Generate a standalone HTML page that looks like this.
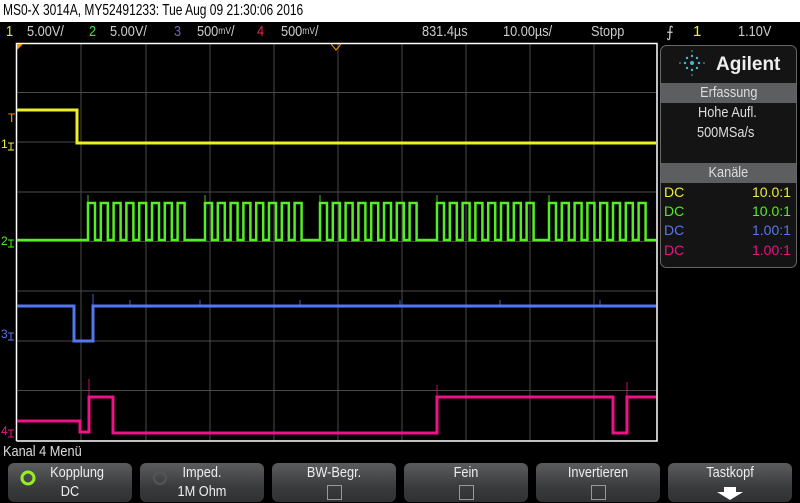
<!DOCTYPE html><html><head><style>
body{margin:0;width:800px;height:503px;background:#000;overflow:hidden;font-family:"Liberation Sans",sans-serif;position:relative}
.t{position:absolute;white-space:nowrap;transform-origin:0 0}
#title{position:absolute;left:0;top:0;width:800px;height:22px;background:#fff}
.btn{position:absolute;top:463px;width:124px;height:39px;border-radius:6px;background:linear-gradient(#5a5c5e,#3a3c3e 60%,#2e3032);color:#eee;font-size:15px;text-align:center}
.btn .a{position:absolute;left:0;right:0;top:1px;transform:scaleX(.85)}
.btn .b{position:absolute;left:0;right:0;top:20px;transform:scaleX(.85)}
.cb{position:absolute;left:55px;top:22px;width:13px;height:13px;border:1px solid #999}
.hd{position:absolute;left:661px;width:135px;height:20px;background:#5c5e60;color:#ddd;font-size:15px;text-align:center;line-height:20px}
</style></head><body>
<div id="title"><div class="t" style="left:3px;top:2px;font-size:16px;color:#000;transform:scaleX(.75)">MS0-X 3014A, MY52491233: Tue Aug 09 21:30:06 2016</div></div>
<div class="t" style="top:23px;left:6px;font-size:15px;color:#ee3;transform:scaleX(.85)">1</div>
<div class="t" style="top:23px;left:27px;font-size:15px;color:#ccc;transform:scaleX(.85)">5.00V/</div>
<div class="t" style="top:23px;left:89px;font-size:15px;color:#4d4;transform:scaleX(.85)">2</div>
<div class="t" style="top:23px;left:110px;font-size:15px;color:#ccc;transform:scaleX(.85)">5.00V/</div>
<div class="t" style="top:23px;left:174px;font-size:15px;color:#66c;transform:scaleX(.85)">3</div>
<div class="t" style="top:23px;left:197px;font-size:15px;color:#ccc;transform:scaleX(.85)">500<span style="font-size:10px;vertical-align:2px">mV</span>/</div>
<div class="t" style="top:23px;left:257px;font-size:15px;color:#e24;transform:scaleX(.85)">4</div>
<div class="t" style="top:23px;left:281px;font-size:15px;color:#ccc;transform:scaleX(.85)">500<span style="font-size:10px;vertical-align:2px">mV</span>/</div>
<div class="t" style="top:23px;left:422px;font-size:15px;color:#ccc;transform:scaleX(.85)">831.4µs</div>
<div class="t" style="top:23px;left:503px;font-size:15px;color:#ccc;transform:scaleX(.85)">10.00µs/</div>
<div class="t" style="top:23px;left:591px;font-size:15px;color:#ccc;transform:scaleX(.85)">Stopp</div>
<div class="t" style="top:23px;left:666px;font-size:15px;color:#ccc">⨍</div>
<div class="t" style="top:23px;left:693px;font-size:15px;color:#ee3">1</div>
<div class="t" style="top:23px;left:738px;font-size:15px;color:#ccc;transform:scaleX(.85)">1.10V</div>
<svg width="800" height="503" style="position:absolute;left:0;top:0">
<g stroke="#4a4a4a" stroke-width="1">
<path d="M81 43V441M146 43V441M210 43V441M274 43V441M338 43V441M402 43V441M466 43V441M530 43V441M594 43V441"/>
<path d="M16 92.5H657M16 142H657M16 192H657M16 241.5H657M16 291H657M16 341H657M16 390.5H657"/>
</g>
<path d="M16.5 441V43.5H657V441H16.5" fill="none" stroke="#fff" stroke-width="1.5"/>
<path d="M17 44h6l-6 6z" fill="#f90"/><path d="M331 44l5 6 5-6" fill="none" stroke="#f90"/>
<g fill="none" stroke-width="3">
<path stroke="#ee2" d="M17 110H77V143H656"/>
<path stroke="#5e2" stroke-width="2.5" d="M17 240H88v-37h7v37h5.8v-37h7v37h5.8v-37h7v37h5.8v-37h7v37h5.8v-37h7v37h5.8v-37h7v37h5.8v-37h7v37h5.8v-37h7v37H205v-37h7v37h5.8v-37h7v37h5.8v-37h7v37h5.8v-37h7v37h5.8v-37h7v37h5.8v-37h7v37h5.8v-37h7v37h5.8v-37h7v37H320v-37h7v37h5.8v-37h7v37h5.8v-37h7v37h5.8v-37h7v37h5.8v-37h7v37h5.8v-37h7v37h5.8v-37h7v37h5.8v-37h7v37H437v-37h7v37h5.8v-37h7v37h5.8v-37h7v37h5.8v-37h7v37h5.8v-37h7v37h5.8v-37h7v37h5.8v-37h7v37h5.8v-37h7v37H549v-37h7v37h5.8v-37h7v37h5.8v-37h7v37h5.8v-37h7v37h5.8v-37h7v37h5.8v-37h7v37h5.8v-37h7v37h5.8v-37h7v37H656"/>
<path stroke="#57e" d="M17 306H74V341H93V306H656"/>
<path stroke="#e18" d="M17 421H80V432H89V397H113V433H437V397H613V433H627V397H656"/>
</g>
<g fill="none" stroke-width="1" opacity=".8">
<path stroke="#5e2" d="M88 240v-45M205 240v-45M320 240v-45M437 240v-45M549 240v-45"/>
<path stroke="#57e" d="M93 306v-12M130 306v-6M200 306v-6M300 306v-6M400 306v-6M500 306v-6M600 306v-6"/>
<path stroke="#e18" d="M89 397v-18M437 397v-12M627 397v-15"/>
</g>
<g font-size="12" font-family="Liberation Sans">
<text x="8" y="122" fill="#f90">T</text>
<text x="1" y="148" fill="#ee3">1</text><path d="M8 143h6M11 143v7M8 150h6" stroke="#ee3"/>
<text x="1" y="245" fill="#5e2">2</text><path d="M8 240h6M11 240v7M8 247h6" stroke="#5e2"/>
<text x="1" y="338" fill="#57e">3</text><path d="M8 333h6M11 333v7M8 340h6" stroke="#57e"/>
<text x="1" y="435" fill="#e18">4</text><path d="M8 430h6M11 430v7M8 437h6" stroke="#e18"/>
</g>
<rect x="660.5" y="45.5" width="136" height="222" rx="6" fill="#141414" stroke="#666"/>
<g fill="#4bc">
<circle cx="692" cy="63" r="2"/><circle cx="692" cy="56" r="1.2"/><circle cx="692" cy="70" r="1.2"/><circle cx="685" cy="63" r="1.2"/><circle cx="699" cy="63" r="1.2"/>
<circle cx="687" cy="58" r="1.2"/><circle cx="697" cy="58" r="1.2"/><circle cx="687" cy="68" r="1.2"/><circle cx="697" cy="68" r="1.2"/>
<circle cx="692" cy="51" r=".8"/><circle cx="692" cy="75" r=".8"/><circle cx="680" cy="63" r=".8"/><circle cx="704" cy="63" r=".8"/>
</g>
<text x="716" y="70" fill="#eee" font-size="19" font-weight="bold" font-family="Liberation Sans">Agilent</text>
</svg>
<div class="hd" style="top:83px"><span style="display:inline-block;transform:scaleX(.85)">Erfassung</span></div>
<div class="t" style="left:698px;top:104px;font-size:15px;color:#ddd;transform:scaleX(.85)">Hohe Aufl.</div>
<div class="t" style="left:697px;top:124px;font-size:15px;color:#ddd;transform:scaleX(.85)">500MSa/s</div>
<div class="hd" style="top:163px"><span style="display:inline-block;transform:scaleX(.85)">Kanäle</span></div>
<div class="t" style="left:664px;top:184px;font-size:14px;color:#ee3">DC</div><div class="t" style="left:752px;top:184px;font-size:14px;color:#ee3">10.0:1</div>
<div class="t" style="left:664px;top:203px;font-size:14px;color:#5e2">DC</div><div class="t" style="left:752px;top:203px;font-size:14px;color:#5e2">10.0:1</div>
<div class="t" style="left:664px;top:222px;font-size:14px;color:#57e">DC</div><div class="t" style="left:752px;top:222px;font-size:14px;color:#57e">1.00:1</div>
<div class="t" style="left:664px;top:242px;font-size:14px;color:#e18">DC</div><div class="t" style="left:752px;top:242px;font-size:14px;color:#e18">1.00:1</div>
<div class="t" style="left:3px;top:443px;font-size:15px;color:#ddd;transform:scaleX(.85)">Kanal 4 Menü</div>
<div class="btn" style="left:8px"><div class="a">&nbsp;&nbsp;&nbsp;&nbsp;Kopplung</div><div class="b">DC</div><svg width="20" height="20" style="position:absolute;left:10px;top:5px"><circle cx="10" cy="10" r="6" fill="none" stroke="#9e2" stroke-width="3"/></svg></div>
<div class="btn" style="left:140px"><div class="a">Imped.</div><div class="b">1M Ohm</div><svg width="20" height="20" style="position:absolute;left:10px;top:5px"><circle cx="10" cy="10" r="6" fill="none" stroke="#555" stroke-width="2"/></svg></div>
<div class="btn" style="left:272px"><div class="a">BW-Begr.</div><div class="cb"></div></div>
<div class="btn" style="left:404px"><div class="a">Fein</div><div class="cb"></div></div>
<div class="btn" style="left:536px"><div class="a">Invertieren</div><div class="cb"></div></div>
<div class="btn" style="left:668px"><div class="a">Tastkopf</div><svg width="30" height="14" style="position:absolute;left:47px;top:24px"><path d="M9 0h12v5h7L15 13 2 5h7z" fill="#fff"/></svg></div>
</body></html>
